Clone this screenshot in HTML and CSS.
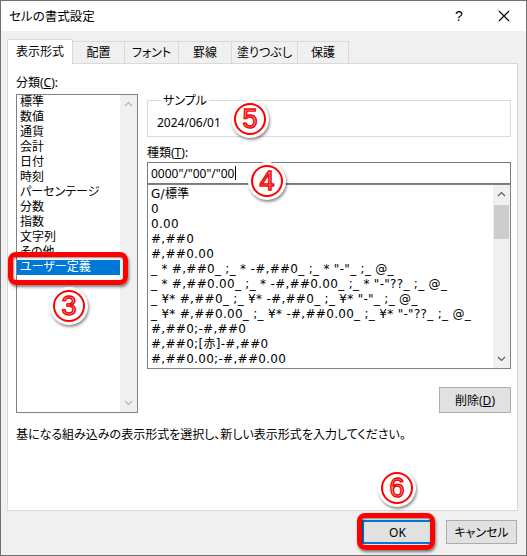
FILE: index.html
```html
<!DOCTYPE html>
<html lang="ja">
<head>
<meta charset="utf-8">
<title>セルの書式設定</title>
<link rel="stylesheet" href="styles.css">
</head>
<body>
<div class="stage">
  <div class="window">
    <div class="titlebar">
      <span class="title">セルの書式設定</span>
      <span class="help">?</span>
      <span class="close"><svg width="12" height="12" viewBox="0 0 12 12"><path d="M1 1L11 11M11 1L1 11" stroke="#000" stroke-width="1.1" fill="none"/></svg></span>
    </div>
    <div class="tabs">
      <div class="tab active">表示形式</div>
      <div class="tab t2">配置</div>
      <div class="tab t3">フォント</div>
      <div class="tab t4">罫線</div>
      <div class="tab t5">塗りつぶし</div>
      <div class="tab t6">保護</div>
    </div>
    <div class="panel">
      <div class="cols">
        <div class="left">
          <div class="label">分類(<u>C</u>):</div>
          <div class="listbox cat">
            <ul class="items">
              <li>標準</li>
              <li>数値</li>
              <li>通貨</li>
              <li>会計</li>
              <li>日付</li>
              <li>時刻</li>
              <li>パーセンテージ</li>
              <li>分数</li>
              <li>指数</li>
              <li>文字列</li>
              <li>その他</li>
              <li class="sel">ユーザー定義</li>
            </ul>
            <div class="vscroll">
              <svg class="arr" width="9" height="6" viewBox="0 0 9 6"><path d="M1 5L4.5 1.5L8 5" stroke="#b4b4b4" stroke-width="1.2" fill="none"/></svg>
              <div class="track"></div>
              <svg class="arr" width="9" height="6" viewBox="0 0 9 6"><path d="M1 1L4.5 4.5L8 1" stroke="#b4b4b4" stroke-width="1.2" fill="none"/></svg>
            </div>
          </div>
        </div>
        <div class="right">
          <fieldset class="sample">
            <legend>サンプル</legend>
            <div class="sample-val">2024/06/01</div>
          </fieldset>
          <div class="label type-label">種類(<u>T</u>):</div>
          <div class="input">0000"/"00"/"00<span class="caret"></span></div>
          <div class="listbox fmt">
            <ul class="items">
              <li>G/標準</li>
              <li>0</li>
              <li>0.00</li>
              <li>#,##0</li>
              <li>#,##0.00</li>
              <li>_ * #,##0_ ;_ * -#,##0_ ;_ * "-"_ ;_ @_</li>
              <li>_ * #,##0.00_ ;_ * -#,##0.00_ ;_ * "-"??_ ;_ @_</li>
              <li>_ ¥* #,##0_ ;_ ¥* -#,##0_ ;_ ¥* "-"_ ;_ @_</li>
              <li>_ ¥* #,##0.00_ ;_ ¥* -#,##0.00_ ;_ ¥* "-"??_ ;_ @_</li>
              <li>#,##0;-#,##0</li>
              <li>#,##0;[赤]-#,##0</li>
              <li>#,##0.00;-#,##0.00</li>
            </ul>
            <div class="vscroll">
              <svg class="arr" width="9" height="6" viewBox="0 0 9 6"><path d="M1 5L4.5 1.5L8 5" stroke="#606060" stroke-width="1.2" fill="none"/></svg>
              <div class="track"><div class="thumb"></div></div>
              <svg class="arr" width="9" height="6" viewBox="0 0 9 6"><path d="M1 1L4.5 4.5L8 1" stroke="#606060" stroke-width="1.2" fill="none"/></svg>
            </div>
          </div>
          <div class="btnrow"><button class="btn del">削除(<u>D</u>)</button></div>
        </div>
      </div>
      <p class="desc">基になる組み込みの表示形式を選択し、新しい表示形式を入力してください。</p>
    </div>
    <div class="footer">
      <button class="btn default">OK</button>
      <button class="btn">キャンセル</button>
    </div>
  </div>

  <div class="hl hl-cat"></div>
  <div class="hl hl-ok"></div>
  <div class="mark m3"><span>3</span></div>
  <div class="mark m4"><span>4</span></div>
  <div class="mark m5"><span>5</span></div>
  <div class="mark m6"><span>6</span></div>
</div>
</body>
</html>
```

FILE: styles.css
```css
* { box-sizing: border-box; }
html, body { margin: 0; padding: 0; background: #fff; }
body {
  font-family: "Noto Sans", "Noto Sans CJK JP", sans-serif;
  font-size: 12px;
  line-height: 15px;
  color: #000;
  font-feature-settings: "palt";
}
.stage { position: relative; width: 527px; height: 556px; }

.window {
  width: 527px;
  height: 556px;
  border: 1px solid #6f6f6f;
  background: #f0f0f0;
  display: flex;
  flex-direction: column;
}

.titlebar {
  height: 30px;
  background: #fff;
  display: flex;
  align-items: center;
  flex: none;
}
.title { margin-left: 8px; flex: 1; font-size: 12.5px; }
.help { width: 14px; text-align: center; font-family: "Liberation Sans", sans-serif; font-size: 14px; margin-right: 32px; }
.close { width: 12px; height: 12px; margin-right: 16px; display: flex; }

.tabs {
  display: flex;
  align-items: flex-end;
  height: 32px;
  margin-left: 6px;
  flex: none;
  position: relative;
  z-index: 2;
}
.tab {
  height: 22px;
  border: 1px solid #d9d9d9;
  border-bottom: none;
  border-left: none;
  background: #f0f0f0;
  display: flex;
  align-items: center;
  justify-content: center;
  font-size: 12px;
}
.tab.active {
  height: 25px;
  width: 66px;
  background: #fff;
  border-left: 1px solid #d9d9d9;
  margin-bottom: -1px;
  padding-bottom: 1px;
}
.t2 { width: 52px; }
.t3 { width: 54px; }
.t4 { width: 53px; }
.t5 { width: 66px; }
.t6 { width: 51px; }

.panel {
  margin-left: 6px;
  width: 511px;
  height: 448px;
  border: 1px solid #d9d9d9;
  background: #fff;
  padding: 11px 6px 0 8px;
  flex: none;
  position: relative;
  z-index: 1;
}
.cols {
  display: grid;
  grid-template-columns: 122px 364px;
  column-gap: 9px;
}
.label { height: 15px; }
.label u, .btn u { text-decoration: underline; }
.left .label { margin-bottom: 4px; }

.listbox {
  border: 1px solid #828282;
  display: flex;
  background: #fff;
}
.listbox.cat { height: 319px; }
.listbox.fmt { height: 185px; }
.items {
  list-style: none;
  margin: 0;
  padding: 0;
  flex: 1;
  overflow: hidden;
  white-space: nowrap;
}
.items li { height: 15px; line-height: 15px; padding-left: 3px; }
.cat .items { font-family: "Liberation Sans", "Noto Sans CJK JP", sans-serif; }
.cat .items li.sel { background: #0078d7; color: #fff; }
.fmt .items {
  padding-top: 2px;
  font-family: "DejaVu Sans", "Noto Sans CJK JP", sans-serif;
  font-size: 12px;
  letter-spacing: 0.3px;
  font-feature-settings: normal;
}

.vscroll {
  width: 17px;
  background: #f0f0f0;
  display: flex;
  flex-direction: column;
  align-items: center;
  flex: none;
}
.arr { margin: 6px 0; flex: none; }
.track { flex: 1; width: 100%; position: relative; padding: 0 1px; }
.thumb { margin-top: 2px; height: 34px; background: #cdcdcd; }

.right { padding-top: 18px; display: flex; flex-direction: column; }
.sample {
  margin: 0;
  border: 1px solid #dcdcdc;
  padding: 0 8px 6px 9px;
  min-width: 0;
}
.sample legend {
  padding: 0 2px;
  margin-left: 4px;
  line-height: 15px;
}
.sample-val { margin-top: 7px; }
.type-label { margin-top: 8px; }
.input {
  margin-top: 2px;
  height: 22px;
  border: 1px solid #7a7a7a;
  padding: 0 3px;
  display: flex;
  align-items: center;
  background: #fff;
}
.caret { display: inline-block; width: 1px; height: 14px; background: #000; margin-left: 1px; }

.btnrow { display: flex; justify-content: flex-end; margin-top: 18px; }
.btn {
  font-family: inherit;
  font-size: 12px;
  line-height: 15px;
  color: #000;
  background: #e1e1e1;
  border: 1px solid #adadad;
  padding: 0;
  margin: 0;
  font-feature-settings: "palt";
}
.btn.del { width: 72px; height: 26px; }

.desc { margin: 14px 0 0; height: 15px; white-space: nowrap; }

.footer {
  display: flex;
  justify-content: flex-end;
  gap: 13px;
  margin-top: 9px;
  padding-right: 9px;
}
.footer .btn { width: 71px; height: 24px; }
.btn.default { border: 2px solid #0078d7; }

/* annotations */
.hl {
  position: absolute;
  border: 5px solid #ff0000;
  border-radius: 8px;
  box-shadow: 1px 2px 3px rgba(0,0,0,.5), inset 1px 1px 2px rgba(0,0,0,.45);
  z-index: 5;
}
.hl-cat { left: 8px; top: 252px; width: 120px; height: 33px; }
.hl-ok { left: 357px; top: 513px; width: 78px; height: 37px; }

.mark {
  position: absolute;
  width: 38px;
  height: 38px;
  border-radius: 50%;
  background: #fff;
  box-shadow: 1px 2px 3px rgba(0,0,0,.45);
  display: flex;
  align-items: center;
  justify-content: center;
  z-index: 6;
}
.mark::before {
  content: "";
  position: absolute;
  left: 3px; top: 3px; right: 3px; bottom: 3px;
  border: 2px solid #ff0000;
  border-radius: 50%;
}
.mark span {
  font-family: "Liberation Sans", sans-serif;
  font-weight: normal;
  font-size: 27px;
  line-height: 27px;
  color: #b4b4b4;
  -webkit-text-stroke: 1.4px #ff0000;
}
.m3 { left: 50px; top: 287px; }
.m4 { left: 248px; top: 162px; }
.m5 { left: 231px; top: 100px; }
.m6 { left: 378px; top: 469px; }
```
